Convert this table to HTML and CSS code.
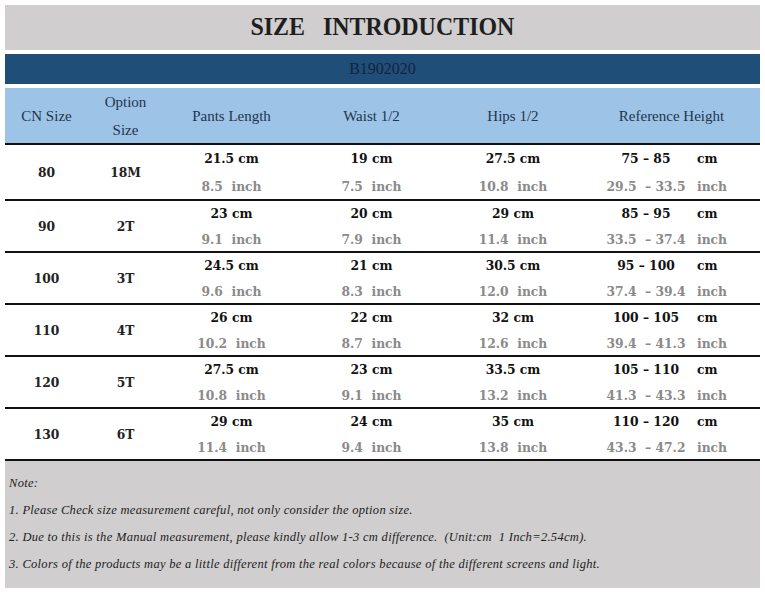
FILE: index.html
```html
<!DOCTYPE html>
<html>
<head>
<meta charset="utf-8">
<link rel="stylesheet" href="styles.css">
</head>
<body>
<div class="sheet">
  <div class="title"><span class="title-text">SIZE&nbsp;&nbsp;&nbsp;INTRODUCTION</span></div>
  <div class="code">B1902020</div>
  <div class="table">
    <div class="row head">
      <div class="cell">CN Size</div>
      <div class="cell stack"><span>Option</span><span>Size</span></div>
      <div class="cell">Pants Length</div>
      <div class="cell">Waist 1/2</div>
      <div class="cell">Hips 1/2</div>
      <div class="cell">Reference Height</div>
    </div>

    <div class="row data first">
      <div class="cell b">80</div><div class="cell b">18M</div>
      <div class="cell m"><span class="cm">21.5 cm</span><span class="in">8.5&nbsp;&nbsp;inch</span></div>
      <div class="cell m"><span class="cm">19 cm</span><span class="in">7.5&nbsp;&nbsp;inch</span></div>
      <div class="cell m"><span class="cm">27.5 cm</span><span class="in">10.8&nbsp;&nbsp;inch</span></div>
      <div class="cell r"><span class="cm rg">75 – 85</span><span class="cm u">cm</span><span class="in rg">29.5&nbsp;&nbsp;– 33.5</span><span class="in u">inch</span></div>
    </div>

    <div class="row data">
      <div class="cell b">90</div><div class="cell b">2T</div>
      <div class="cell m"><span class="cm">23 cm</span><span class="in">9.1&nbsp;&nbsp;inch</span></div>
      <div class="cell m"><span class="cm">20 cm</span><span class="in">7.9&nbsp;&nbsp;inch</span></div>
      <div class="cell m"><span class="cm">29 cm</span><span class="in">11.4&nbsp;&nbsp;inch</span></div>
      <div class="cell r"><span class="cm rg">85 – 95</span><span class="cm u">cm</span><span class="in rg">33.5&nbsp;&nbsp;– 37.4</span><span class="in u">inch</span></div>
    </div>

    <div class="row data">
      <div class="cell b">100</div><div class="cell b">3T</div>
      <div class="cell m"><span class="cm">24.5 cm</span><span class="in">9.6&nbsp;&nbsp;inch</span></div>
      <div class="cell m"><span class="cm">21 cm</span><span class="in">8.3&nbsp;&nbsp;inch</span></div>
      <div class="cell m"><span class="cm">30.5 cm</span><span class="in">12.0&nbsp;&nbsp;inch</span></div>
      <div class="cell r"><span class="cm rg">95 – 100</span><span class="cm u">cm</span><span class="in rg">37.4&nbsp;&nbsp;– 39.4</span><span class="in u">inch</span></div>
    </div>

    <div class="row data">
      <div class="cell b">110</div><div class="cell b">4T</div>
      <div class="cell m"><span class="cm">26 cm</span><span class="in">10.2&nbsp;&nbsp;inch</span></div>
      <div class="cell m"><span class="cm">22 cm</span><span class="in">8.7&nbsp;&nbsp;inch</span></div>
      <div class="cell m"><span class="cm">32 cm</span><span class="in">12.6&nbsp;&nbsp;inch</span></div>
      <div class="cell r"><span class="cm rg">100 – 105</span><span class="cm u">cm</span><span class="in rg">39.4&nbsp;&nbsp;– 41.3</span><span class="in u">inch</span></div>
    </div>

    <div class="row data">
      <div class="cell b">120</div><div class="cell b">5T</div>
      <div class="cell m"><span class="cm">27.5 cm</span><span class="in">10.8&nbsp;&nbsp;inch</span></div>
      <div class="cell m"><span class="cm">23 cm</span><span class="in">9.1&nbsp;&nbsp;inch</span></div>
      <div class="cell m"><span class="cm">33.5 cm</span><span class="in">13.2&nbsp;&nbsp;inch</span></div>
      <div class="cell r"><span class="cm rg">105 – 110</span><span class="cm u">cm</span><span class="in rg">41.3&nbsp;&nbsp;– 43.3</span><span class="in u">inch</span></div>
    </div>

    <div class="row data">
      <div class="cell b">130</div><div class="cell b">6T</div>
      <div class="cell m"><span class="cm">29 cm</span><span class="in">11.4&nbsp;&nbsp;inch</span></div>
      <div class="cell m"><span class="cm">24 cm</span><span class="in">9.4&nbsp;&nbsp;inch</span></div>
      <div class="cell m"><span class="cm">35 cm</span><span class="in">13.8&nbsp;&nbsp;inch</span></div>
      <div class="cell r"><span class="cm rg">110 – 120</span><span class="cm u">cm</span><span class="in rg">43.3&nbsp;&nbsp;– 47.2</span><span class="in u">inch</span></div>
    </div>
  </div>
  <div class="notes">
    <p>Note:</p>
    <p>1. Please Check size measurement careful, not only consider the option size.</p>
    <p>2. Due to this is the Manual measurement, please kindly allow 1-3 cm difference.&nbsp; (Unit:cm&nbsp; 1 Inch=2.54cm).</p>
    <p>3. Colors of the products may be a little different from the real colors because of the different screens and light.</p>
  </div>
</div>
</body>
</html>
```
FILE: styles.css
```css
html, body {
  margin: 0;
  padding: 0;
  background: #ffffff;
}
.sheet {
  padding: 5px;
  width: 755px;
  font-family: "Liberation Serif", "Times New Roman", serif;
}
.title {
  height: 45px;
  background: #d0cecf;
  display: flex;
  align-items: center;
  justify-content: center;
  margin-bottom: 4px;
  box-sizing: border-box;
  padding-bottom: 1px;
}
.title-text {
  display: inline-block;
  font-size: 26px;
  font-weight: bold;
  color: #1e1e1e;
  transform: scaleX(0.92);
}
.code {
  height: 30px;
  background: #1f4e79;
  color: #14243a;
  font-size: 16px;
  display: flex;
  align-items: center;
  justify-content: center;
  margin-bottom: 4px;
}
.row {
  display: grid;
  grid-template-columns: 83px 75px 137px 143px 140px 177px;
  border-bottom: 2px solid #111;
}
.head {
  height: 55px;
  background: #9dc3e6;
  color: #1f3550;
  font-size: 15px;
}
.head .cell {
  display: flex;
  align-items: center;
  justify-content: center;
}
.head .stack {
  flex-direction: column;
  line-height: 28px;
}
.data {
  height: 50px;
  font-family: "DejaVu Serif", "Liberation Serif", serif;
  font-weight: bold;
  font-size: 12.3px;
}
.data.first {
  height: 54px;
}
.data .cell {
  display: flex;
  flex-direction: column;
  align-items: center;
  justify-content: center;
  line-height: 26px;
  white-space: nowrap;
}
.data.first .cell {
  line-height: 28px;
}
.data .b {
  color: #222;
}
.cm {
  color: #111;
}
.in {
  color: #8a8a8a;
}
.data .r {
  display: grid;
  grid-template-columns: 110px 67px;
  align-content: center;
  justify-items: start;
}
.data .r .rg {
  justify-self: center;
  padding-left: 16px;
}
.data .r .u {
  padding-left: 4px;
}
.notes {
  height: 127px;
  background: #d0cecf;
  font-style: italic;
  font-size: 12.5px;
  letter-spacing: 0.3px;
  color: #222;
  padding: 9px 0 0 4px;
  box-sizing: border-box;
}
.notes p {
  margin: 0;
  line-height: 27px;
}
```
